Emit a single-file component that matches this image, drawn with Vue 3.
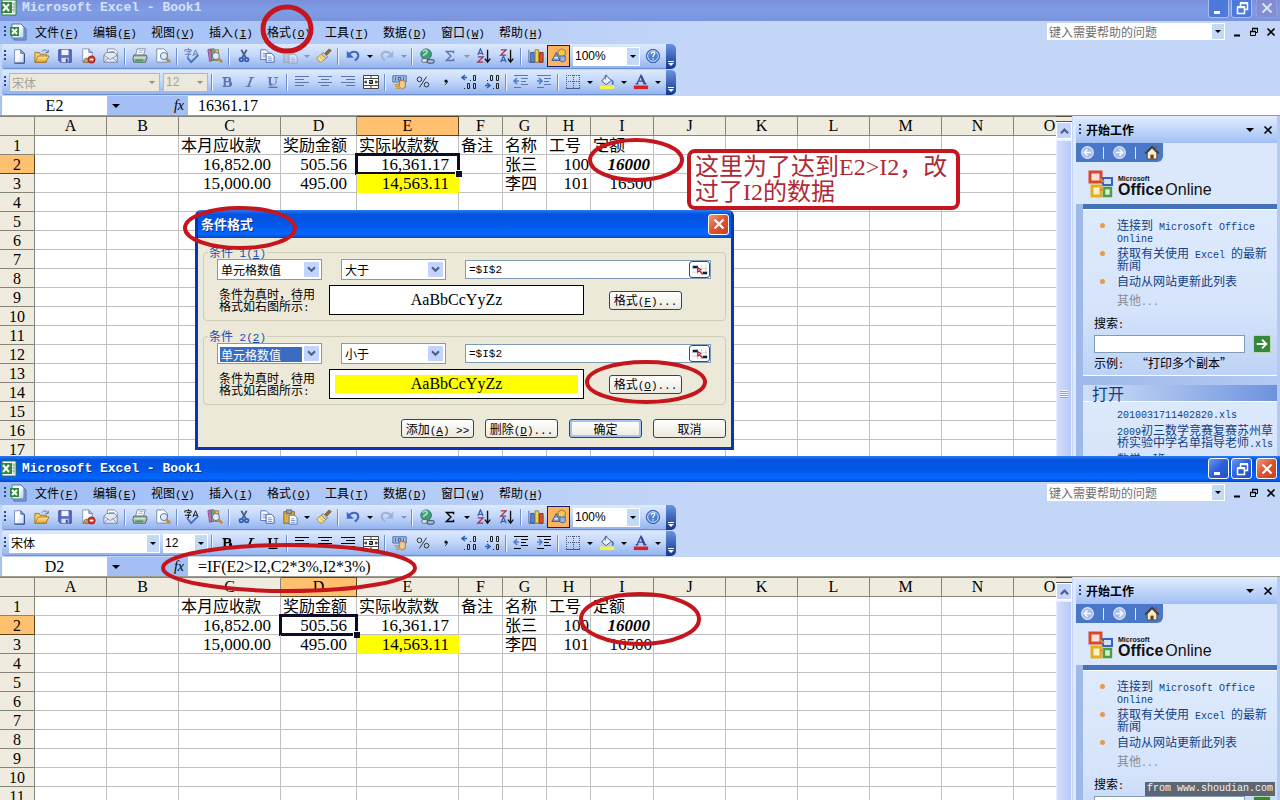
<script setup>
import { h, ref } from 'vue'

// Splits a label into CJK and Latin runs so that each gets its own face and size.
// A pair of underscores marks an access key: "文件(_F_)".
const Mix = (props) =>
  h(
    'span',
    { class: 'mix' },
    (props.text.match(/_[^_]_|[^\x20-\x7e]+|[\x20-\x5e\x60-\x7e]+/g) || []).map((run) => {
      if (run[0] === '_') return h('u', { class: 'latin' }, run[1])
      return h('span', { class: /^[\x20-\x7e]/.test(run) ? 'latin' : 'han' }, run)
    })
  )
Mix.props = ['text']

const menus = ['文件(_F_)', '编辑(_E_)', '视图(_V_)', '插入(_I_)', '格式(_O_)', '工具(_T_)', '数据(_D_)', '窗口(_W_)', '帮助(_H_)']

const standard = [
  ['new', '新建'], ['open', '打开'], ['save', '保存'], ['perm', '权限'], ['mail', '电子邮件'], '|',
  ['print', '打印'], ['preview', '打印预览'], '|',
  ['spell', '拼写检查', 1], ['research', '信息检索'], '|',
  ['cut', '剪切'], ['copy', '复制'], ['paste', '粘贴', 1], 'v', ['brush', '格式刷'], '|',
  ['undo', '撤销'], 'V', ['redo', '恢复'], 'g', '|',
  ['link', '超链接'], ['sum', '自动求和', 1], 'v', ['az', '升序'], ['za', '降序'], '|',
  ['chart', '图表向导'], ['draw', '绘图'],
]
const formatting = [
  '|', ['bold', '加粗', 1], ['italic', '倾斜', 1], ['underline', '下划线', 1], '|',
  ['left', '左对齐', 1], ['center', '居中', 1], ['right', '右对齐', 1], ['merge', '合并及居中'], '|',
  ['money', '货币样式'], ['percent', '百分比样式'], ['comma', '千位分隔样式'], ['incdec', '增加小数位数'], ['decdec', '减少小数位数'], '|',
  ['outdent', '减少缩进量', 1], ['indent', '增加缩进量', 1], '|',
  ['border', '边框'], 'V', ['fill', '填充颜色'], 'V', ['color', '字体颜色'], 'V',
]

const columns = [
  ['A', 'w72'], ['B', 'w72'], ['C', 'w102'], ['D', 'w76'], ['E', 'w102'], ['F', 'w44'], ['G', 'w44'], ['H', 'w44'],
  ['I', 'w63'], ['J', 'w72'], ['K', 'w72'], ['L', 'w72'], ['M', 'w72'], ['N', 'w72'], ['O', 'w72'],
]
const cells = {
  C1: ['本月应收款'], D1: ['奖励金额'], E1: ['实际收款数'], F1: ['备注'], G1: ['名称'], H1: ['工号'], I1: ['定额'],
  C2: ['16,852.00', 'amount'], D2: ['505.56', 'amount'], E2: ['16,361.17', 'amount'], G2: ['张三'], H2: ['100', 'num'], I2: ['16000', 'num strong'],
  C3: ['15,000.00', 'amount'], D3: ['495.00', 'amount'], E3: ['14,563.11', 'amount yellow'], G3: ['李四'], H3: ['101', 'num'], I3: ['16500', 'num'],
}

const windows = [
  { id: 'a', active: false, col: 'E', value: '16361.17' },
  { id: 'b', active: true, col: 'D', value: '=IF(E2>I2,C2*3%,I2*3%)' },
]

const conditions = [
  { title: '条件 1(_1_)', op: '大于', format: '格式(_F_)...', picked: false },
  { title: '条件 2(_2_)', op: '小于', format: '格式(_O_)...', picked: true },
]
const formula = ref('=$I$2')
const news = ['连接到 Microsoft Office Online', '获取有关使用 Excel 的最新新闻', '自动从网站更新此列表']
const files = ['2010031711402820.xls', '2009初三数学竞赛复赛苏州草桥实验中学名单指导老师.xls', '数学 1班']
</script>

<template>
  <svg class="defs" aria-hidden="true">
    <defs>
      <linearGradient id="paper" x1="0" y1="0" x2="1" y2="1"><stop offset=".4" stop-color="#fff" /><stop offset="1" stop-color="#b9cdf0" /></linearGradient>
      <linearGradient id="gold" x1="0" y1="0" x2="0" y2="1"><stop offset="0" stop-color="#ffe9a0" /><stop offset="1" stop-color="#e5a52c" /></linearGradient>
      <symbol id="excel" viewBox="0 0 18 18">
        <path d="M2 1h14v15H2z" fill="#fff" stroke="#2c7a3b" /><path d="M14 3v11M11 5h4M11 8h4M11 11h4" stroke="#86b38c" />
        <path d="M1 3h11v11H1z" fill="#2f8a40" /><path d="M3 5l6 7M9 5l-6 7" stroke="#fff" stroke-width="2" />
      </symbol>
      <symbol id="book" viewBox="0 0 18 18">
        <path d="M5 3h9l3 3v11H5z" fill="#8fa9d8" stroke="#4a6aa8" /><path d="M3 1h9l3 3v11H3z" fill="url(#paper)" stroke="#5676b4" />
        <path d="M1 4h9v9H1z" fill="#2f8a40" /><path d="M3 6l5 5M8 6l-5 5" stroke="#fff" stroke-width="2" />
      </symbol>
      <symbol id="new" viewBox="0 0 18 18"><path d="M4 2h7l4 4v11H4z" fill="url(#paper)" stroke="#6f86b4" /><path d="M15 6v11H4" fill="none" stroke="#1f3a74" /><path d="M11 2v4h4z" fill="#8fa8d8" stroke="#4f6aa4" /></symbol>
      <symbol id="open" viewBox="0 0 18 18"><path d="M1 5h5l1 2h7v9H1z" fill="#f3cd63" stroke="#9c7428" /><path d="M1 16l4-7h12l-4 7z" fill="url(#gold)" stroke="#9c7428" /><path d="M9 4c2-3 5-2 6 0M16 2v3h-3" fill="none" stroke="#3d62a8" /></symbol>
      <symbol id="save" viewBox="0 0 18 18"><path d="M2 2h14v14H4l-2-2z" fill="#5d6ec0" stroke="#333f8c" /><path d="M5 2h8v6H5z" fill="#eef3ff" /><path d="M5 11h8v5H5z" fill="#d5def2" /><path d="M10 12h2v4h-2z" fill="#39468f" /></symbol>
      <symbol id="perm" viewBox="0 0 18 18"><path d="M3 1h7l4 4v11H3z" fill="url(#paper)" stroke="#7f8fb0" /><path d="M10 1v4h4" fill="#a9b8d8" stroke="#6b7ca6" /><path d="M4 15c0-4 6-5 6-1v2H4z" fill="#caa26a" stroke="#8a6638" /><circle cx="13" cy="13" r="4" fill="#d8352a" stroke="#9c1d16" /><path d="M11 13h4" stroke="#fff" stroke-width="2" /></symbol>
      <symbol id="mail" viewBox="0 0 18 18"><path d="M5 1h8l3 3v6H5z" fill="#fff" stroke="#7b8bab" /><path d="M7 4h6M7 6h7" stroke="#9aa7c2" /><path d="M1 8l3-3h9l3 3v8H1z" fill="#e3e8f3" stroke="#6f7f9f" /><path d="M1 8l7 5 8-5M1 16l5-5M16 16l-5-5" fill="none" stroke="#8492b0" /></symbol>
      <symbol id="print" viewBox="0 0 18 18"><path d="M6 1h9l-2 7H4z" fill="#fff" stroke="#7186a8" /><path d="M8 3h5M7 5h5" stroke="#9db0ce" /><path d="M2 8h14l1 3-2 5H2l-1-4z" fill="#a9b9b4" stroke="#4d5d66" /><path d="M2 11h13" stroke="#eef3f1" /><path d="M4 13h9l-1 2H3z" fill="#38a247" /></symbol>
      <symbol id="preview" viewBox="0 0 18 18"><path d="M2 1h8l4 4v11H2z" fill="url(#paper)" stroke="#6f86b4" /><circle cx="10" cy="9" r="4" fill="#d8ecfb" stroke="#5b6e8c" /><path d="M13 12l4 4" stroke="#c28a34" stroke-width="3" /></symbol>
      <symbol id="spell" viewBox="0 0 18 18"><path d="M5 0v2M1 4V2h7v2M3 4h4L5 6v4H3M1 7h7" fill="none" stroke="currentColor" /><path d="M10 9l3-7 3 7M11 7h4" fill="none" stroke="currentColor" /><path d="M4 11l4 5 8-8" fill="none" stroke="#3f6ec2" stroke-width="2" /></symbol>
      <symbol id="research" viewBox="0 0 18 18"><path d="M1 2l3-1 2 13-3 1z" fill="#cf72b2" stroke="#7a4a86" /><path d="M5 1h3v13H5z" fill="#7fb36c" stroke="#4e7a4a" /><path d="M9 2h4v12H9z" fill="#f0cf77" stroke="#8d7239" /><circle cx="10" cy="9" r="4" fill="#dcedfb" stroke="#56698c" /><path d="M13 12l4 4" stroke="#c28a34" stroke-width="3" /></symbol>
      <symbol id="cut" viewBox="0 0 18 18"><path d="M6 2l5 9M12 2l-5 9" stroke="#4b5f86" stroke-width="2" /><circle cx="6" cy="13" r="2" fill="none" stroke="#2f5db5" stroke-width="2" /><circle cx="12" cy="13" r="2" fill="none" stroke="#2f5db5" stroke-width="2" /></symbol>
      <symbol id="copy" viewBox="0 0 18 18"><path d="M2 2h6l3 3v8H2z" fill="#fff" stroke="#4a68ad" /><path d="M4 6h4M4 8h5M4 10h5" stroke="#6d8cc9" /><path d="M8 6h6l3 3v7H8z" fill="#fff" stroke="#3a59a2" /><path d="M10 10h4M10 12h5M10 14h5" stroke="#6d8cc9" /></symbol>
      <symbol id="paste" viewBox="0 0 18 18"><path d="M2 3h12v13H2z" fill="#e0ad45" stroke="#86652a" /><path d="M5 1h6v4H5z" fill="#9aa3ad" stroke="#59626d" /><path d="M8 7h6l3 3v7H8z" fill="#fff" stroke="#4a68ad" /><path d="M10 11h4M10 13h5M10 15h5" stroke="#6d8cc9" /></symbol>
      <symbol id="brush" viewBox="0 0 18 18"><path d="M15 1l2 2-5 5-2-2z" fill="#a06a33" stroke="#6d4720" /><path d="M8 5l5 5-2 2-5-5z" fill="#c9cfd8" stroke="#6e7786" /><path d="M6 7l5 5-5 4c-2 0-5-3-5-5z" fill="#f7e08b" stroke="#a98a3a" /><path d="M4 9l5 5" stroke="#c7a64b" /></symbol>
      <symbol id="undo" viewBox="0 0 18 18"><path d="M4 8c3-5 10-5 11 0 0 3-2 5-4 6" fill="none" stroke="#3f68c0" stroke-width="2.4" /><path d="M2 3v8h8z" fill="#3f68c0" /></symbol>
      <symbol id="redo" viewBox="0 0 18 18"><path d="M14 8C11 3 4 3 3 8c0 3 2 5 4 6" fill="none" stroke="#9fb2d8" stroke-width="2.4" /><path d="M16 3v8H8z" fill="#9fb2d8" /></symbol>
      <symbol id="link" viewBox="0 0 18 18"><circle cx="8" cy="7" r="6" fill="#3f9d74" stroke="#2c6c86" /><path d="M4 4c3-3 6-1 5 1s-4 2-4 4" fill="none" stroke="#a5e0b0" stroke-width="2" /><rect x="3" y="12" width="7" height="4" rx="2" fill="#dfe6ee" stroke="#535f70" /><rect x="9" y="13" width="8" height="4" rx="2" fill="none" stroke="#535f70" stroke-width="1.5" /></symbol>
      <symbol id="sum" viewBox="0 0 18 18"><path d="M13 6V4H5l5 5-5 5h8v-2" fill="none" stroke="currentColor" stroke-width="1.6" /></symbol>
      <symbol id="az" viewBox="0 0 18 18"><path d="M2 8l3-7 3 7M3 6h4" fill="none" stroke="#3a5fb2" stroke-width="1.4" /><path d="M2 10h6l-6 6h6" fill="none" stroke="#a5324a" stroke-width="1.4" /><path d="M13 2v13M10 12l3 4 3-4" fill="none" stroke="#111" stroke-width="1.5" /></symbol>
      <symbol id="za" viewBox="0 0 18 18"><path d="M2 2h6L2 8h6" fill="none" stroke="#a5324a" stroke-width="1.4" /><path d="M2 16l3-7 3 7M3 14h4" fill="none" stroke="#3a5fb2" stroke-width="1.4" /><path d="M13 2v13M10 12l3 4 3-4" fill="none" stroke="#111" stroke-width="1.5" /></symbol>
      <symbol id="chart" viewBox="0 0 18 18"><path d="M1 2v14h16" fill="none" stroke="#44608f" /><path d="M3 5h4v11H3z" fill="#5b86d8" stroke="#2f4f96" /><path d="M8 2h4v14H8z" fill="#f4cf4e" stroke="#9a7a20" /><path d="M13 5h4v11h-4z" fill="#d4522f" stroke="#8a2c18" /></symbol>
      <symbol id="draw" viewBox="0 0 18 18"><path d="M8 3l4-2 4 2v5l-4 2-4-2z" fill="#f1c85a" stroke="#936d25" /><path d="M10 9h6v5c0 2-6 2-6 0z" fill="#8fb6ea" stroke="#3d5f9e" /><path d="M1 14l5-9 4 9z" fill="#7f9fd0" stroke="#3458a0" /><path d="M4 11h4" stroke="#fff" stroke-width="1.5" /></symbol>
      <symbol id="help" viewBox="0 0 18 18"><circle cx="9" cy="9" r="7.500" fill="#4f80cf" stroke="#2d56a0" /><circle cx="9" cy="9" r="6" fill="none" stroke="#e8f1ff" /><path d="M7 7c0-3 4-3 4-1 0 1.500-2 1.500-2 4M9 11.500v1.500" fill="none" stroke="#fff" stroke-width="1.500" /></symbol>
      <symbol id="bold" viewBox="0 0 18 18"><path d="M4 4h6c4 0 4 4.500 0 4.500h-4 5c4 0 4 5.500 0 5.500H4" fill="none" stroke="currentColor" stroke-width="1.400" /><path d="M6.500 4v10M11.500 5c1 1 1 2 0 3M12 9.500c1 1 1 2.500 0 3.500" stroke="currentColor" stroke-width="2.400" fill="none" /></symbol>
      <symbol id="italic" viewBox="0 0 18 18"><path d="M8 4h6M4 14h6" stroke="currentColor" /><path d="M11 4L7 14" stroke="currentColor" stroke-width="2" /></symbol>
      <symbol id="underline" viewBox="0 0 18 18"><path d="M3 4h5M10 4h5M12.500 4v5c0 4-6 4-7 1" fill="none" stroke="currentColor" /><path d="M5.500 4v6c0 1 1 2 2 2" stroke="currentColor" stroke-width="2.400" fill="none" /><path d="M4 15h10" stroke="currentColor" stroke-width="1.500" /></symbol>
      <symbol id="left" viewBox="0 0 16 16"><path d="M1 2.500h14M1 5.500h9M1 8.500h14M1 11.500h9" stroke="currentColor" /></symbol>
      <symbol id="center" viewBox="0 0 16 16"><path d="M1 2.500h14M4 5.500h8M1 8.500h14M4 11.500h8" stroke="currentColor" /></symbol>
      <symbol id="right" viewBox="0 0 16 16"><path d="M1 2.500h14M6 5.500h9M1 8.500h14M6 11.500h9" stroke="currentColor" /></symbol>
      <symbol id="merge" viewBox="0 0 16 16"><path d="M.5 1.500h15v13H.5zM8 1v4M8 11v4" fill="#fff" stroke="#444" /><path d="M.5 4.500h15v7H.5z" fill="#fff" stroke="#444" /><path d="M1 8h3M12 8h3M3 6.500v3M13 6.500v3" stroke="#111" /><path d="M6 6.500h3.500v3h-3v-1.500h3" fill="none" stroke="#111" /></symbol>
      <symbol id="money" viewBox="0 0 18 18"><path d="M1 2h15v7H1z" fill="#a6c3ee" stroke="#3f5f9f" /><path d="M4 3.500v4M7 4h3v3H7zM13 3.500v4" fill="none" stroke="#2f4f90" /><path d="M9 7l6 1v7l-4 2-3-3z" fill="#f3c88a" stroke="#a5733a" /><path d="M3 12h5M4 14h4M5 16h4" stroke="#c99a2e" stroke-width="1.500" /></symbol>
      <symbol id="percent" viewBox="0 0 18 18"><circle cx="5" cy="6" r="2.600" fill="none" stroke="#222" /><circle cx="13" cy="12" r="2.600" fill="none" stroke="#222" /><path d="M13 3L5 15" stroke="#222" /></symbol>
      <symbol id="comma" viewBox="0 0 18 18"><circle cx="9" cy="8" r="1.800" fill="#111" /><path d="M10.500 8c0 2-1 3-2.500 4" fill="none" stroke="#111" /></symbol>
      <symbol id="incdec" viewBox="0 0 16 16"><path d="M1 3.500h5M4 1L1 3.500 4 6" fill="none" stroke="#2d5fbd" stroke-width="1.500" /><path d="M9 6.500h1M12.500 1.500h2v5h-2zM3 14.500h1M6.500 9.500h2v5h-2zM12.500 9.500h2v5h-2z" fill="none" stroke="#222" /></symbol>
      <symbol id="decdec" viewBox="0 0 16 16"><path d="M1 11.500h5M3 9l3 2.500L3 14" fill="none" stroke="#2d5fbd" stroke-width="1.500" /><path d="M9 14.500h1M12.500 9.500h2v5h-2zM3 6.500h1M6.500 1.500h2v5h-2zM12.500 1.500h2v5h-2z" fill="none" stroke="#222" /></symbol>
      <symbol id="outdent" viewBox="0 0 16 16"><path d="M1 1.500h14M8 4.500h7M8 7.500h5M8 10.500h7M1 13.500h7" stroke="currentColor" /><path d="M1 7h5M4 4L1 7l3 3" fill="none" stroke="#4f7bd0" stroke-width="1.500" /></symbol>
      <symbol id="indent" viewBox="0 0 16 16"><path d="M1 1.500h14M8 4.500h7M8 7.500h5M8 10.500h7M1 13.500h7" stroke="currentColor" /><path d="M1 7h5M3 4l3 3-3 3" fill="none" stroke="#4f7bd0" stroke-width="1.500" /></symbol>
      <symbol id="border" viewBox="0 0 16 16"><path d="M1.500 1v13M8.500 1v13M14.500 1v13M1 1.500h14M1 7.500h14" stroke="#4a5b86" stroke-dasharray="1 1" /><path d="M1 14.500h14" stroke="#4a5b86" /></symbol>
      <symbol id="fill" viewBox="0 0 18 18"><path d="M8 2l6 5-6 5-5-4z" fill="#e6eefb" stroke="#3d4f78" /><path d="M7 6V2c0-1 2-1 2 0" fill="none" stroke="#3d4f78" /><path d="M14 7c2 1 2 3 1 5" fill="none" stroke="#3f78d0" stroke-width="2" /><path d="M1 13h16v4H1z" fill="#f6f04a" /></symbol>
      <symbol id="color" viewBox="0 0 18 18"><path d="M4.500 11L9 1.500 13.500 11M6 8h6M3 11h3M12 11h3" fill="none" stroke="#3a4f92" stroke-width="1.500" /><path d="M9 2l4 9" stroke="#3a4f92" stroke-width="2.500" /><path d="M1 13h16v4H1z" fill="#d8202c" /></symbol>
      <symbol id="refpick" viewBox="0 0 20 14"><path d="M1 1h18v12H1z" fill="#fff" /><path d="M7.500 1v12M12.500 1v12M17.500 1v12M1 5.500h18M1 9.500h18" stroke="#c9ccd2" /><path d="M2 3.500h6M14 10.500h5" stroke="#111a4a" stroke-width="3" /><path d="M8 4v5l2-1 4 4M8 4l4 3" fill="none" stroke="#b3202a" stroke-width="1.500" /></symbol>
      <symbol id="min" viewBox="0 0 18 18"><path d="M4 12h6v3H4z" fill="#fff" /></symbol>
      <symbol id="restore" viewBox="0 0 18 18"><path d="M7.500 7V4.500h7v6H12M4.500 8.500h7v6h-7z" fill="none" stroke="#fff" stroke-width="1.500" /><path d="M7 4h8M4 8h8" stroke="#fff" stroke-width="2" /></symbol>
      <symbol id="close" viewBox="0 0 18 18"><path d="M4.500 4.500l9 9M13.500 4.500l-9 9" stroke="#fff" stroke-width="2.200" /></symbol>
      <symbol id="chev" viewBox="0 0 10 8"><path d="M1 1.500l4 4 4-4" fill="none" stroke="#4d6185" stroke-width="2.400" /></symbol>
    </defs>
  </svg>

  <main class="stage">
    <section v-for="w in windows" :key="w.id" class="win" :class="{ active: w.active }">
      <header class="title">
        <div class="title-in">
          <svg class="i18"><use href="#excel" /></svg>
          <h1>Microsoft Excel - Book1</h1>
          <button class="cap" aria-label="最小化"><svg class="i18"><use href="#min" /></svg></button>
          <button class="cap" aria-label="还原"><svg class="i18"><use href="#restore" /></svg></button>
          <button class="cap red" aria-label="关闭"><svg class="i18"><use href="#close" /></svg></button>
        </div>
      </header>

      <nav class="menubar">
        <i class="grip"></i>
        <svg class="i18 book"><use href="#book" /></svg>
        <button v-for="m in menus" :key="m" class="menu"><Mix :text="m" /></button>
        <div class="ask">
          <input aria-label="帮助" placeholder="键入需要帮助的问题" />
          <i class="drop"><b class="tri"></b></i>
        </div>
        <button class="mdi" aria-label="最小化窗口"><svg viewBox="0 0 10 10"><path d="M2 8.500h6" stroke="#000" stroke-width="2" /></svg></button>
        <button class="mdi" aria-label="还原窗口"><svg viewBox="0 0 10 10"><path d="M3.500 4V1.500h5v4H7M1.500 4.500h5v4h-5z" fill="none" stroke="#000" /><path d="M3 1.500h6M1 4.500h6" stroke="#000" stroke-width="1.500" /></svg></button>
        <button class="mdi" aria-label="关闭窗口"><svg viewBox="0 0 10 10"><path d="M1.500 1.500l7 7M8.500 1.500l-7 7" stroke="#000" stroke-width="1.600" /></svg></button>
      </nav>

      <div class="bar">
        <i class="grip"></i>
        <template v-for="(t, n) in standard" :key="n">
          <i v-if="t === '|'" class="sep"></i>
          <button v-else-if="typeof t === 'string'" class="caret" :class="{ dim: t === 'g' || (t === 'v' && !w.active) }" aria-label="更多"><b class="tri"></b></button>
          <button v-else class="tool" :class="{ on: t[0] === 'draw', dim: t[2] && !w.active, faded: t[0] === 'paste' && !w.active }" :aria-label="t[1]">
            <svg class="i18"><use :href="'#' + t[0]" /></svg>
          </button>
        </template>
        <div class="box zoom">
          <select aria-label="显示比例"><option>100%</option></select>
          <i class="drop"><b class="tri"></b></i>
        </div>
        <button class="tool" aria-label="帮助"><svg class="i18"><use href="#help" /></svg></button>
        <button class="end" aria-label="工具栏选项"><i></i><b class="tri"></b></button>
      </div>

      <div class="bar">
        <i class="grip"></i>
        <div class="box font" :class="{ off: !w.active }">
          <select aria-label="字体" :disabled="!w.active"><option>宋体</option></select>
          <i class="drop"><b class="tri"></b></i>
        </div>
        <div class="box size" :class="{ off: !w.active }">
          <select aria-label="字号" :disabled="!w.active"><option>12</option></select>
          <i class="drop"><b class="tri"></b></i>
        </div>
        <template v-for="(t, n) in formatting" :key="n">
          <i v-if="t === '|'" class="sep"></i>
          <button v-else-if="typeof t === 'string'" class="caret" aria-label="更多"><b class="tri"></b></button>
          <button v-else class="tool" :class="{ dim: t[2] && !w.active }" :aria-label="t[1]">
            <svg class="i18"><use :href="'#' + t[0]" /></svg>
          </button>
        </template>
        <button class="end" aria-label="工具栏选项"><i></i><b class="tri"></b></button>
      </div>

      <div class="fbar">
        <input class="name" aria-label="名称框" :value="w.col + '2'" />
        <div class="fx"><b class="tri big"></b><em>fx</em></div>
        <input class="formula" aria-label="编辑栏" :value="w.value" />
      </div>

      <div class="work">
        <div class="sheet">
          <table>
            <colgroup>
              <col class="w35" />
              <col v-for="c in columns" :key="c[0]" :class="c[1]" />
            </colgroup>
            <thead>
              <tr>
                <th></th>
                <th v-for="c in columns" :key="c[0]" scope="col" :class="{ sel: c[0] === w.col }">{{ c[0] }}</th>
              </tr>
            </thead>
            <tbody>
              <tr v-for="r in w.active ? 11 : 17" :key="r">
                <th scope="row" :class="{ sel: r === 2 }">{{ r }}</th>
                <td v-for="c in columns" :key="c[0]" :class="[cells[c[0] + r]?.[1], { cursor: r === 2 && c[0] === w.col }]">{{ cells[c[0] + r]?.[0] }}</td>
              </tr>
            </tbody>
          </table>
        </div>

        <div class="scroll">
          <i class="split"></i>
          <button class="up" aria-label="向上滚动"><svg viewBox="0 0 10 8"><path d="M1 6.500l4-4 4 4" fill="none" stroke="#4d6185" stroke-width="2.400" /></svg></button>
          <div class="thumb"><i></i></div>
        </div>

        <aside class="pane">
          <header class="phead">
            <i class="grip"></i><h2>开始工作</h2>
            <b class="tri big"></b>
            <button class="mdi" aria-label="关闭任务窗格"><svg viewBox="0 0 10 10"><path d="M1.500 1.500l7 7M8.500 1.500l-7 7" stroke="#000" stroke-width="1.600" /></svg></button>
          </header>
          <div class="pnav">
            <div class="tab">
              <button aria-label="后退"><svg viewBox="0 0 14 14"><circle cx="7" cy="7" r="5.500" fill="#a9bfe8" stroke="#dbe6fa" /><path d="M10.500 7H4M7 4L4 7l3 3" fill="none" stroke="#f4f8ff" stroke-width="1.500" /></svg></button>
              <i></i>
              <button aria-label="前进"><svg viewBox="0 0 14 14"><circle cx="7" cy="7" r="5.500" fill="#a9bfe8" stroke="#dbe6fa" /><path d="M3.500 7H10M7 4l3 3-3 3" fill="none" stroke="#f4f8ff" stroke-width="1.500" /></svg></button>
              <i></i>
              <button aria-label="主页"><svg viewBox="0 0 14 14"><path d="M3 7v6h9V7L7.500 2.500z" fill="#f6edc8" stroke="#5a5346" /><path d="M1 8l6.500-6.500L14 8" fill="none" stroke="#3c3d48" stroke-width="1.600" /><path d="M6 9h3v4H6z" fill="#70401f" /><path d="M11 1v4" stroke="#b04428" stroke-width="1.500" /></svg></button>
            </div>
          </div>
          <div class="pbody">
            <div class="logo">
              <svg viewBox="0 0 27 29" class="mark">
                <path d="M2 2h11v10H2z" fill="#fbe2d8" stroke="#d9482b" stroke-width="3" />
                <path d="M15 8h9v7h-9z" fill="#cfe0fa" stroke="#3a62c4" stroke-width="2" />
                <path d="M4 16h9v10H4z" fill="#fdf3c4" stroke="#e3ae1f" stroke-width="3" />
                <path d="M16 18h7v8h-7z" fill="#d8f0cf" stroke="#4aa03f" stroke-width="2.400" />
                <path d="M12 9l4 3M12 20l4-1" stroke="#e8872d" stroke-width="2" />
              </svg>
              <div class="brand"><small>Microsoft</small><p><b>Office</b> Online</p></div>
            </div>
            <div class="card">
              <ul>
                <li v-for="n in news" :key="n"><a href="#"><Mix :text="n" /></a></li>
              </ul>
              <a href="#" class="more"><Mix text="其他..." /></a>
              <label :for="'q' + w.id"><Mix text="搜索:" /></label>
              <div class="find">
                <input :id="'q' + w.id" />
                <button aria-label="搜索"><svg viewBox="0 0 18 18"><path d="M3 9h11M9 4l5 5-5 5" fill="none" stroke="#fff" stroke-width="2" /></svg></button>
              </div>
              <p class="eg"><Mix text="示例:" /><span>“打印多个副本”</span></p>
            </div>
            <div v-if="!w.active" class="card">
              <h3>打开</h3>
              <div class="files"><a v-for="f in files" :key="f" href="#"><Mix :text="f" /></a></div>
            </div>
          </div>
        </aside>
      </div>

      <template v-if="!w.active">
        <form class="dialog" @submit.prevent>
          <header>
            <h2>条件格式</h2>
            <button type="button" class="cap red" aria-label="关闭对话框"><svg class="i18"><use href="#close" /></svg></button>
          </header>
          <div class="dbody">
            <fieldset v-for="(c, n) in conditions" :key="n">
              <legend><Mix :text="c.title" /></legend>
              <div class="row">
                <div class="combo" :class="{ picked: c.picked }">
                  <select aria-label="条件类型"><option>单元格数值</option></select>
                  <i><svg viewBox="0 0 10 8"><use href="#chev" /></svg></i>
                </div>
                <div class="combo">
                  <select aria-label="比较"><option>{{ c.op }}</option></select>
                  <i><svg viewBox="0 0 10 8"><use href="#chev" /></svg></i>
                </div>
                <div class="ref">
                  <input v-model="formula" aria-label="条件值" />
                  <button type="button" aria-label="选择单元格"><svg viewBox="0 0 20 14"><use href="#refpick" /></svg></button>
                </div>
              </div>
              <div class="row">
                <p class="hint"><Mix text="条件为真时，待用格式如右图所示:" /></p>
                <div class="sample" :class="{ picked: c.picked }"><span>AaBbCcYyZz</span></div>
                <button type="button" class="btn"><Mix :text="c.format" /></button>
              </div>
            </fieldset>
            <footer>
              <button type="button" class="btn"><Mix text="添加(_A_) >>" /></button>
              <button type="button" class="btn"><Mix text="删除(_D_)..." /></button>
              <button type="submit" class="btn main">确定</button>
              <button type="button" class="btn">取消</button>
            </footer>
          </div>
        </form>
        <p class="note">这里为了达到E2&gt;I2，改过了I2的数据</p>
        <svg class="ink" aria-hidden="true">
          <ellipse cx="287" cy="29" rx="24" ry="22" class="thick" />
          <ellipse cx="636" cy="160" rx="46" ry="20" />
          <ellipse cx="240" cy="228" rx="55" ry="20" />
          <ellipse cx="646" cy="382" rx="59" ry="20" />
        </svg>
      </template>
      <template v-else>
        <svg class="ink" aria-hidden="true">
          <ellipse cx="289" cy="112" rx="126" ry="23" />
          <ellipse cx="640" cy="163" rx="59" ry="25" />
        </svg>
        <p class="mark-text">from www.shoudian.com</p>
      </template>
    </section>
  </main>
</template>

<style>
html, body { background: #fff; overflow: hidden; }
.mix .latin { font-family: "Liberation Mono", monospace; font-size: 10px; line-height: 0; white-space: pre-wrap; }
.menu .latin, .dialog .latin { font-size: 11px; }
</style>

<style scoped>
* { box-sizing: border-box; margin: 0; padding: 0; }
button, input, select { font: inherit; color: inherit; border: 0; background: none; border-radius: 0; outline: 0; min-width: 0; }
select { appearance: none; opacity: 1; }
i { font-style: normal; }
a { color: inherit; text-decoration: none; }
svg { display: block; }
.defs { position: absolute; width: 0; height: 0; }
.i18 { width: 18px; height: 18px; flex: none; }

.stage {
  height: 100vh; display: grid; grid-template-rows: 57fr 43fr;
  font: 12px/12px "Noto Sans CJK SC", sans-serif; color: #000;
}
.win { position: relative; min-height: 0; overflow: hidden; display: flex; flex-direction: column; background: #c3d6f8; }
.win > * { flex: none; }

.title { height: 21px; display: flex; align-items: flex-end; overflow: hidden; background: linear-gradient(#7b90dd, #7d9ee4 50%, #7b93dd); color: #d5e0fa; }
.active .title { height: 26px; background: linear-gradient(#2d7cf0, #0453e0 15%, #0257e8 50%, #0467ff 85%, #0248c8); color: #fff; }
.title-in { flex: 1; height: 26px; display: flex; align-items: center; padding: 0 3px 1px 0; gap: 2px; }
h1 { flex: 1; font: bold 13px/16px "Liberation Mono", monospace; padding-left: 2px; }
.active h1 { text-shadow: 1px 1px #0a2f8a; }
.cap { width: 21px; height: 21px; border: 1px solid #fff; border-radius: 3px; display: grid; place-items: center; background: linear-gradient(135deg, #6d95f2, #2a5fdc 50%, #2452c8); }
.cap.red { background: linear-gradient(135deg, #ee9a80, #dc5330 50%, #c8401f); margin-left: 2px; }
.win:not(.active) .title .cap { border-color: #a9bdf2; background: #4d78dc; }
.win:not(.active) .title .cap.red { background: #8688cc; border-color: #a49cd4; opacity: .7; }

.menubar { height: 23px; display: flex; align-items: center; padding: 0 1px 2px 4px; background: linear-gradient(90deg, #9fbdf6, #c3d6f8 55%); }
.grip { flex: none; width: 3px; height: 12px; background: repeating-linear-gradient(#2f4684 0 2px, transparent 2px 4px) 0 0 / 2px 100% no-repeat; }
.book { margin: 0 1px 0 2px; }
.menu { height: 20px; padding: 0 0 0 7px; width: 58px; text-align: left; white-space: nowrap; }
.ask { margin: 0 3px 0 auto; width: 178px; height: 17px; display: flex; background: #fff; }
.ask input { flex: 1; padding-left: 2px; line-height: 17px; }
.ask input::placeholder { color: #6e6e6e; opacity: 1; }
.drop { width: 12px; flex: none; display: grid; place-items: center; background: #c3daf6; margin: 1px; }
.tri { display: block; width: 0; height: 0; border: solid transparent; border-width: 3px 3px 0; border-top-color: #000; }
.tri.big { border-width: 4px 4px 0; }
.mdi { width: 17px; height: 16px; display: grid; place-items: center; }
.mdi svg { width: 10px; height: 10px; }

.bar { height: 25px; margin: 0 0 1px 2px; align-self: flex-start; display: flex; align-items: center; padding-left: 2px; background: linear-gradient(#dde9fd, #c4d8fa 45%, #94b3ee); border-bottom: 1px solid #6b8fd6; border-radius: 3px 6px 6px 3px; }
.sep { width: 6px; height: 17px; flex: none; background: linear-gradient(90deg, transparent 2px, #6d8fd0 2px 3px, #eef4ff 3px 4px, transparent 4px); }
.tool { width: 23px; height: 22px; flex: none; display: grid; place-items: center; color: #000; }
.tool svg { width: 16px; height: 16px; }
.tool.dim { color: #5e76ad; }
.tool.faded svg { filter: grayscale(1) opacity(.4); }
.tool.on { background: #fdb35f; border: 1px solid #151c6b; }
.caret { width: 11px; height: 22px; flex: none; display: grid; place-items: center; }
.dim .tri { border-top-color: #8496bf; }
.box { height: 19px; flex: none; display: flex; background: #fff; }
.box select { flex: 1; padding-left: 2px; line-height: 18px; }
.zoom { width: 67px; margin: 0 1px 0 3px; }
.zoom select, .size select { font: 12px/18px "Liberation Sans", sans-serif; }
.font { width: 151px; margin: 0 3px 0 2px; }
.size { width: 45px; margin-right: 1px; }
.off { background: #ece9dc; border: 1px solid #b8b8ac; color: #a3a394; }
.off select { line-height: 15px; }
.off .drop { background: none; }
.off .tri { border-top-color: #8c8c80; }
.end { width: 10px; height: 25px; margin-left: 2px; display: flex; flex-direction: column; justify-content: flex-end; align-items: center; gap: 1px; padding-bottom: 3px; background: linear-gradient(#6a93e0, #12388f); border-radius: 0 5px 5px 0; }
.caret + .end { margin-left: 3px; }
.end i { width: 6px; height: 1px; background: #fff; }
.end .tri { border-top-color: #fff; }

.fbar { height: 20px; display: flex; padding-left: 2px; background: #a3bff3; border-bottom: 1px solid #9a9a90; font: 16px/19px "Liberation Serif", serif; }
.name { width: 105px; background: #fff; text-align: center; }
.fx { width: 81px; display: flex; align-items: center; justify-content: space-between; padding: 0 4px 0 5px; }
.fx em { font: italic 14px/16px "Liberation Serif", serif; }
.formula { flex: 1; background: #fff; padding-left: 10px; }

.win > .work { flex: 1; min-height: 0; display: flex; overflow: hidden; }
.sheet { flex: 1; min-width: 0; overflow: hidden; background: #fff; }
table { width: 1086px; table-layout: fixed; border-collapse: separate; border-spacing: 0; font: 16px/18px "Liberation Serif", "Noto Sans CJK SC", serif; }
.w35 { width: 35px; } .w44 { width: 44px; } .w63 { width: 63px; } .w72 { width: 72px; } .w76 { width: 76px; } .w102 { width: 102px; }
tr { height: 19px; }
thead tr { height: 20px; }
th { height: 19px; font-weight: 400; background: #efebde; border: solid #85857a; border-width: 0 1px 1px 0; }
thead th { height: 20px; border-top-width: 1px; }
tbody th { padding-top: 2px; line-height: 16px; }
th.sel { background: #ffc070; border-color: #5b4420; }
td { position: relative; height: 19px; padding: 2px 0 0 2px; line-height: 16px; border: solid #c0c0c0; border-width: 0 1px 1px 0; white-space: nowrap; }
.amount, .num { text-align: right; font-size: 17px; }
.amount { padding-right: 9px; }
.num { padding-right: 1px; }
.strong { font-weight: 700; font-style: italic; padding-right: 3px; }
.yellow { background: #ff0; border-color: #ff0; }
.cursor::before { content: ""; position: absolute; inset: -2px; border: 3px solid #0c0c28; }
.cursor::after { content: ""; position: absolute; right: -4px; bottom: -4px; width: 6px; height: 6px; background: #0c0c28; border: solid #fff; border-width: 1px 0 0 1px; z-index: 1; }

.scroll { width: 16px; flex: none; display: flex; flex-direction: column; background: #f2f4fb; overflow: hidden; }
.split { flex: none; height: 6px; border: solid #55554a; border-width: 1px 0; background: #efebde; }
.up { flex: none; height: 17px; margin-bottom: 1px; background: #c5d4fb; border: 1px solid #fff; border-radius: 2px; display: grid; place-items: center; }
.up svg { width: 9px; height: 8px; }
.thumb { flex: none; height: 508px; background: linear-gradient(90deg, #d3defc, #b9c9f6); border: 1px solid #e8eeff; display: flex; flex-direction: column; align-items: center; justify-content: center; }
.thumb i { width: 8px; height: 8px; background: repeating-linear-gradient(#eef3ff 0 1px, #8ea6e0 1px 2px); }

.pane { width: 207px; flex: none; margin-left: 1px; padding-right: 3px; display: flex; flex-direction: column; border-left: 3px solid #dfe9fc; background: linear-gradient(90deg, #9fb8ea, #b4caf3); }
.phead { height: 27px; flex: none; display: flex; align-items: center; padding: 0 1px 0 3px; background: linear-gradient(#e1edfe, #a2c0f6); }
.phead h2 { flex: 1; font-size: 12px; line-height: 14px; padding-left: 4px; }
.phead .mdi { margin-left: 5px; }
.pnav { height: 19px; flex: none; background: #dbe8fc; }
.tab { width: 87px; height: 19px; display: flex; align-items: center; justify-content: space-around; background: #4a78c8; border-radius: 0 0 6px 0; }
.tab svg { width: 15px; height: 15px; }
.tab i { width: 1px; height: 12px; background: #dfe8f8; }
.pbody { flex: 1; min-height: 0; display: flex; flex-direction: column; gap: 9px; padding-left: 7px; }
.logo { height: 42px; flex: none; margin: 0 0 -9px -7px; padding: 8px 0 0 12px; display: flex; gap: 3px; background: #dbe8fc; }
.mark { width: 27px; height: 29px; }
.brand { font-family: "Liberation Sans", sans-serif; color: #111; padding-top: 5px; }
.brand small { display: block; font-size: 7px; line-height: 7px; font-weight: 700; }
.brand p { display: flex; gap: 2px; font-size: 16px; line-height: 16px; }
.card { flex: none; border-bottom: 1px solid #fff; background: linear-gradient(#deebfd, #d6e4fb 60%, #bdd2f6); }
.logo + .card { border-top: 5px solid #4672ba; box-shadow: inset 0 1px #fff; padding: 10px 6px 5px 11px; }
ul { list-style: none; display: grid; gap: 4px; color: #123f86; }
li { position: relative; padding-left: 23px; }
li::before { content: ""; position: absolute; left: 6px; top: 4px; width: 5px; height: 5px; border-radius: 50%; background: #e89a4a; }
.more { display: block; margin: 7px 0 11px 23px; color: #8a8a92; }
.card label { display: block; }
.find { display: flex; gap: 8px; align-items: center; margin: 6px 0 3px; }
.find input { flex: 1; height: 18px; background: #fff; border: 1px solid #7f9db9; }
.find button { width: 18px; height: 18px; background: #35883a; border: 1px solid #b9d8b0; border-radius: 2px; }
.eg { display: flex; gap: 12px; line-height: 14px; }
h3 { font-size: 16px; line-height: 16px; font-weight: 400; padding-left: 9px; color: #123f86; background: linear-gradient(90deg, #cfdff9, #6d93dd); border-bottom: 1px solid #fff; }
.files { display: grid; gap: 5px; padding: 5px 0 40px 34px; color: #123f86; word-break: break-all; }

.dialog { position: absolute; left: 195px; top: 210px; width: 539px; background: #ece9d8; border: solid #0a35b8; border-width: 0 3px 3px; border-radius: 6px 6px 0 0; overflow: hidden; }
.dialog > header { height: 28px; display: flex; align-items: center; padding: 0 2px 0 3px; background: linear-gradient(#2d7cf0, #0453e0 15%, #0257e8 50%, #0467ff 85%, #0248c8); }
.dialog h2 { flex: 1; font-size: 13px; line-height: 16px; color: #fff; text-shadow: 1px 1px #0a2f8a; }
.dbody { padding: 7px 5px 9px; display: flex; flex-direction: column; gap: 8px; }
fieldset { border: 1px solid #cfccb8; border-radius: 4px; padding: 0 12px 5px 13px; min-width: 0; }
legend { color: #1a4ab0; line-height: 14px; margin-left: -9px; padding: 0 1px; }
.row { display: flex; align-items: center; }
.row + .row { margin-top: 5px; }
.combo { width: 105px; height: 21px; margin-right: 19px; flex: none; display: flex; gap: 2px; padding: 2px; background: #fff; border: 1px solid #7f9db9; }
.combo select { flex: 1; line-height: 16px; padding-left: 1px; }
.combo.picked select { background: #3a6cc0; color: #fff; height: 15px; margin-top: 1px; line-height: 14px; }
.combo i { width: 15px; display: grid; place-items: center; background: #c3d3fb; border-radius: 1px; }
.combo i svg { width: 9px; height: 7px; }
.ref { flex: 1; max-width: 246px; height: 19px; display: flex; background: #fff; border: 1px solid #7f9db9; }
.ref input { flex: 1; padding-left: 3px; font: 11px "Liberation Mono", monospace; }
.ref button { width: 21px; border: 1px solid #2c4f7c; border-radius: 3px; display: grid; place-items: center; }
.ref svg { width: 17px; height: 12px; }
.hint { width: 100px; margin: 0 10px 0 2px; }
.sample { width: 255px; height: 30px; margin-right: 25px; padding: 5px; background: #fff; border: 1px solid #000; font: 16px/18px "Liberation Serif", serif; text-align: center; }
.sample span { display: block; }
.sample.picked span { background: #ff0; }
.btn { width: 73px; height: 19px; white-space: nowrap; line-height: 14px; background: linear-gradient(#fff, #ece9e0); border: 1px solid #1f4a78; border-radius: 3px; text-align: center; }
.btn.main { box-shadow: inset 0 0 0 2px #a9c3f0; }
.dbody footer { display: flex; justify-content: flex-end; gap: 11px; margin-top: 6px; }

.note { position: absolute; left: 687px; top: 149px; width: 273px; height: 61px; padding: 2px 2px 0 4px; background: #fff; border: 4px solid #c5161d; border-radius: 8px; font: 24px/25px "Liberation Serif", "Noto Sans CJK SC", serif; color: #b02a35; word-break: break-all; }
.ink { position: absolute; left: 0; top: 0; width: 1280px; height: 450px; pointer-events: none; fill: none; stroke: #c5161d; stroke-width: 4px; }
.thick { stroke-width: 5px; }
.mark-text { position: absolute; right: 5px; bottom: 4px; padding: 1px 2px; background: #5f6673; color: #f2f2f2; font: 10px/12px "Liberation Mono", monospace; }
</style>
